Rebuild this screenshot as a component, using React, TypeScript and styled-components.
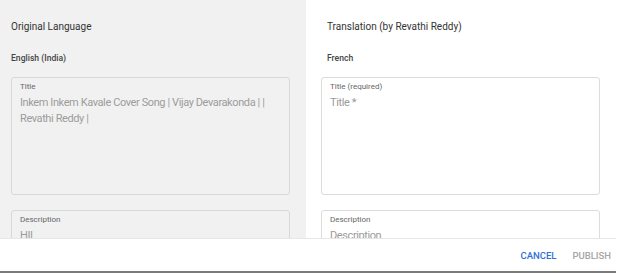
import styled, { createGlobalStyle } from "styled-components";

const GlobalStyle = createGlobalStyle`
    body {
        margin: 0;
        background: #fff;
        font-family: Roboto, "Liberation Sans", Arial, sans-serif;
    }
`

const Page = styled.div`
    width: 616px;
    height: 274px;
    display: flex;
    flex-direction: column;
`

const Content = styled.div`
    height: 238px;
    flex-shrink: 0;
    display: flex;
    overflow: hidden;
`

const Column = styled.div<{ $grey?: boolean }>`
    width: ${p => p.$grey ? "306px" : "310px"};
    background: ${p => p.$grey ? "#f1f1f1" : "#fff"};
    padding-left: ${p => p.$grey ? "11px" : "15px"};
    box-sizing: border-box;
    display: flex;
    flex-direction: column;
`

const Heading = styled.div<{ $indent?: number }>`
    height: 52px;
    flex-shrink: 0;
    display: flex;
    align-items: center;
    padding-left: ${p => p.$indent ?? 0}px;
    font-size: 10px;
    color: #333;
`

const Lang = styled.div<{ $indent?: number }>`
    height: 25px;
    flex-shrink: 0;
    padding-left: ${p => p.$indent ?? 0}px;
    font-size: 8.6px;
    font-weight: 500;
    color: #444;
    line-height: 12px;
`

const Field = styled.div<{ $readonly?: boolean; $height?: number }>`
    width: 279px;
    height: ${p => p.$height ?? 118}px;
    box-sizing: border-box;
    border: 1px solid ${p => p.$readonly ? "#d8d8d8" : "#dcdcdc"};
    border-radius: 3px;
    background: ${p => p.$readonly ? "#f1f1f1" : "#fff"};
    padding: 3px 8px 0;
    margin-bottom: 15px;
    flex-shrink: 0;
`

const FieldLabel = styled.div`
    font-size: 8px;
    color: #666;
    line-height: 12px;
`

const FieldValue = styled.div<{ $placeholder?: boolean }>`
    font-size: 11px;
    letter-spacing: -0.4px;
    line-height: 16px;
    color: ${p => p.$placeholder ? "#9a9a9a" : "#9c9c9c"};
    margin-top: 2px;
`

const Footer = styled.div`
    height: 32px;
    flex-shrink: 0;
    border-top: 1px solid #e6e6e6;
    border-bottom: 2px solid #7a7a7a;
    display: flex;
    justify-content: flex-end;
    align-items: center;
    gap: 16px;
    padding-right: 5px;
`

const Action = styled.button<{ $primary?: boolean }>`
    border: none;
    background: none;
    padding: 0;
    font-family: inherit;
    font-size: 9.5px;
    font-weight: 500;
    color: ${p => p.$primary ? "#2f6fd6" : "#a6a6a6"};
    cursor: pointer;
`

export default function App() {
    return (<Page>
        <GlobalStyle />
        <Content>
            <Column $grey>
                <Heading>Original Language</Heading>
                <Lang>English (India)</Lang>
                <Field $readonly>
                    <FieldLabel>Title</FieldLabel>
                    <FieldValue>Inkem Inkem Kavale Cover Song | Vijay Devarakonda | | Revathi Reddy |</FieldValue>
                </Field>
                <Field $readonly $height={60}>
                    <FieldLabel>Description</FieldLabel>
                    <FieldValue>HII</FieldValue>
                </Field>
            </Column>
            <Column>
                <Heading $indent={6}>Translation (by Revathi Reddy)</Heading>
                <Lang $indent={6}>French</Lang>
                <Field>
                    <FieldLabel>Title (required)</FieldLabel>
                    <FieldValue $placeholder>Title *</FieldValue>
                </Field>
                <Field $height={60}>
                    <FieldLabel>Description</FieldLabel>
                    <FieldValue $placeholder>Description</FieldValue>
                </Field>
            </Column>
        </Content>
        <Footer>
            <Action $primary>CANCEL</Action>
            <Action>PUBLISH</Action>
        </Footer>
    </Page>)
}
